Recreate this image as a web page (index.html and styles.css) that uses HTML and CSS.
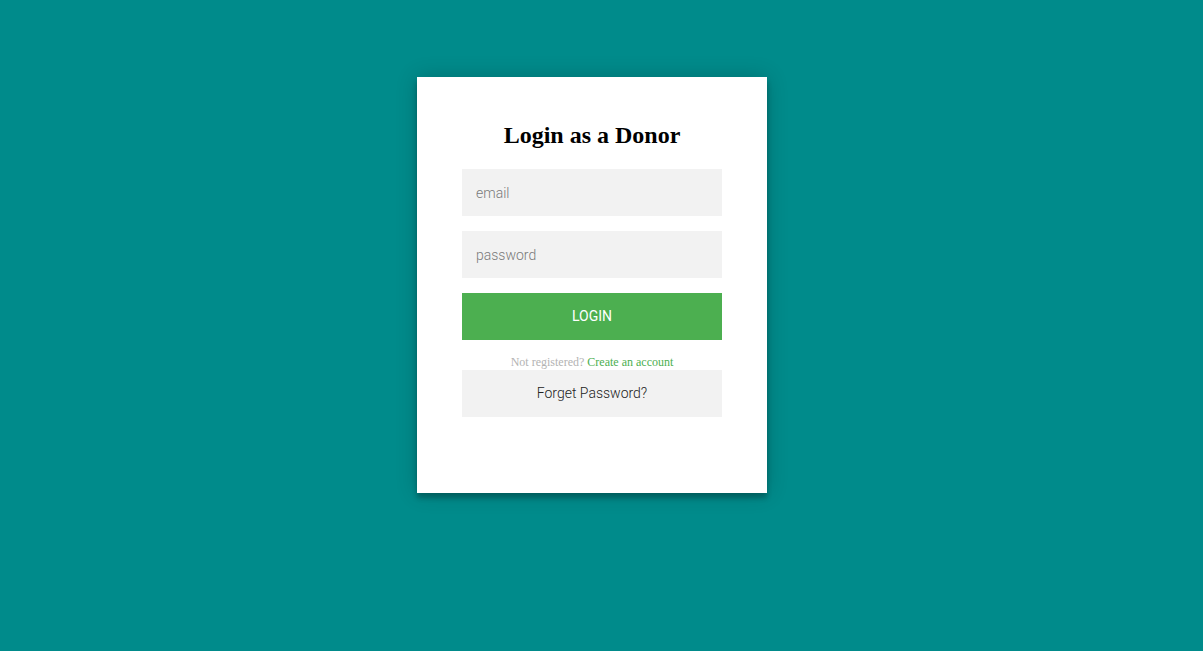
FILE: index.html
```html
<!DOCTYPE html>
<html>
<head>
<meta charset="utf-8">
<link rel="stylesheet" href="styles.css">
</head>
<body>
<div class="login-page">
  <div class="form">
    <h2 class="title">Login as a Donor</h2>
    <input class="field" type="text" placeholder="email">
    <input class="field" type="password" placeholder="password">
    <button class="btn-login">login</button>
    <p class="message">Not registered? <a href="#">Create an account</a></p>
    <button class="btn-forget">Forget Password?</button>
  </div>
</div>
</body>
</html>
```
FILE: styles.css
```css
html, body {
  margin: 0;
  padding: 0;
  background: #008b8b;
  height: 100%;
}
.login-page {
  padding: 77px 19px 0 0;
}
.form {
  width: 350px;
  box-sizing: border-box;
  margin: 0 auto;
  background: #fff;
  padding: 44px 45px 76px;
  text-align: center;
  box-shadow: 0 0 20px 0 rgba(0,0,0,0.2), 0 5px 5px 0 rgba(0,0,0,0.24);
}
.title {
  font-family: "Liberation Serif", serif;
  font-size: 24px;
  font-weight: bold;
  line-height: 28px;
  margin: 0 0 20px;
  color: #000;
}
.field {
  display: block;
  width: 100%;
  box-sizing: border-box;
  font-family: Roboto, sans-serif;
  font-weight: 300;
  font-size: 14px;
  line-height: 17px;
  height: 47px;
  padding: 15px 14px;
  margin: 0 0 15px;
  border: 0;
  outline: 0;
  background: #f2f2f2;
  color: #333;
}
.field::placeholder {
  color: #7a7a7a;
}
.btn-login, .btn-forget {
  display: block;
  width: 100%;
  border: 0;
  padding: 15px;
  font-family: Roboto, sans-serif;
  font-size: 14px;
  line-height: 17px;
  cursor: pointer;
}
.btn-login {
  text-transform: uppercase;
  background: #4caf50;
  color: #fff;
  font-weight: 400;
}
.btn-forget {
  background: #f2f2f2;
  color: #222;
  font-weight: 300;
}
.message {
  margin: 14px 0 0;
  font-family: "Liberation Serif", serif;
  font-size: 12px;
  line-height: 16px;
  color: #b3b3b3;
}
.message a {
  color: #4caf50;
  text-decoration: none;
}
```
